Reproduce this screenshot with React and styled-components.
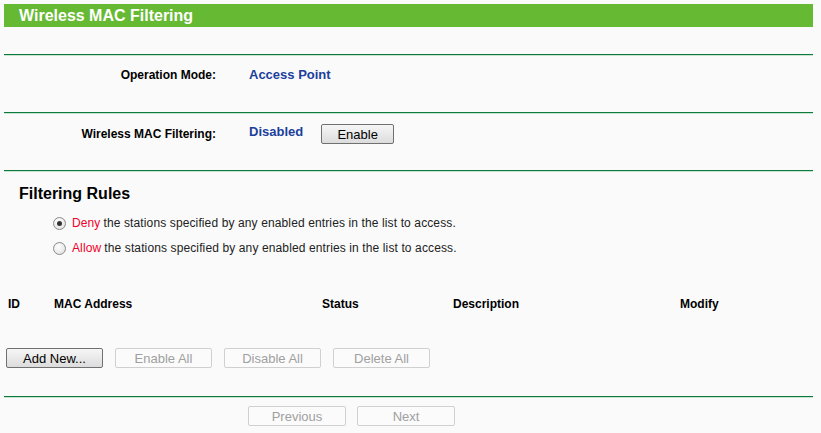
import styled, { createGlobalStyle } from "styled-components";

const GlobalStyle = createGlobalStyle`
  html, body {
    margin: 0;
    padding: 0;
    background: #fafafa;
    font-family: "Liberation Sans", Arial, sans-serif;
    font-size: 12px;
    color: #000;
  }
`;

const Page = styled.div`
  width: 809px;
  padding: 4px 8px 0 4px;
`;

const TitleBar = styled.div`
  height: 23px;
  background: #66b933;
  color: #fff;
  font-weight: bold;
  font-size: 16px;
  line-height: 23px;
  padding-left: 15px;
`;

const Divider = styled.div`
  height: 1px;
  background: #0b7a3e;
  border-bottom: 1px solid #c9e3cf;
  margin-top: ${(p) => p.$top || 0}px;
`;

const InfoRow = styled.div`
  height: 56px;
  display: flex;
  align-items: flex-start;
  padding-top: ${(p) => p.$pad || 10}px;
  box-sizing: border-box;
`;

const Label = styled.div`
  width: 212px;
  text-align: right;
  font-weight: bold;
  font-size: 12px;
  line-height: 18px;
`;

const Value = styled.div`
  margin-left: 33px;
  color: #1b3f9c;
  font-weight: bold;
  font-size: 13px;
  line-height: 18px;
`;

const Button = styled.button`
  box-sizing: border-box;
  width: ${(p) => p.$w || 97}px;
  height: 20px;
  padding: 2px 0 0;
  line-height: 16px;
  font-family: "Liberation Sans", Arial, sans-serif;
  font-size: 13px;
  color: ${(p) => (p.disabled ? "#a0a0a0" : "#000")};
  background: ${(p) =>
    p.disabled ? "#fbfbfb" : "linear-gradient(#f6f6f6, #dcdcdc)"};
  border: 1px solid ${(p) => (p.disabled ? "#d0d0d0" : "#707070")};
  border-radius: 2px;
  margin-left: ${(p) => p.$ml || 0}px;
`;

const SectionTitle = styled.div`
  font-size: 16px;
  font-weight: bold;
  padding: 12px 0 0 15px;
  line-height: 20px;
`;

const RadioList = styled.div`
  padding: 12px 0 0 49px;
  display: flex;
  flex-direction: column;
  gap: 10px;
`;

const RadioRow = styled.label`
  display: flex;
  align-items: center;
  gap: 6px;
  font-size: 12px;
  line-height: 15px;
  letter-spacing: 0.12px;
  color: #222;
`;

const RadioDot = styled.span`
  box-sizing: border-box;
  width: 13px;
  height: 13px;
  border-radius: 50%;
  border: 1px solid #8a8a8a;
  background: radial-gradient(circle at 40% 35%, #ffffff, #dcdcdc);
  display: flex;
  align-items: center;
  justify-content: center;
  &::after {
    content: "";
    width: 5px;
    height: 5px;
    border-radius: 50%;
    background: ${(p) => (p.$on ? "#333" : "transparent")};
  }
`;

const Red = styled.span`
  color: #f0002a;
  margin-right: 3px;
`;

const TableHead = styled.div`
  display: grid;
  grid-template-columns: 46px 268px 131px 227px 1fr;
  padding: 41px 0 0 4px;
  font-weight: bold;
  font-size: 12px;
  line-height: 14px;
`;

const ButtonRow = styled.div`
  display: flex;
  gap: 12px;
  padding: 37px 0 0 2px;
`;

const NavRow = styled.div`
  display: flex;
  gap: 11px;
  padding: 8px 0 0 244px;
`;

export default function App() {
  return (
    <>
      <GlobalStyle />
      <Page>
        <TitleBar>Wireless MAC Filtering</TitleBar>
        <Divider $top={27} />
        <InfoRow $pad={10}>
          <Label>Operation Mode:</Label>
          <Value>Access Point</Value>
        </InfoRow>
        <Divider />
        <InfoRow $pad={9}>
          <Label style={{ paddingTop: 2 }}>Wireless MAC Filtering:</Label>
          <Value>Disabled</Value>
          <Button $w={73} $ml={18} style={{ marginTop: 1 }}>
            Enable
          </Button>
        </InfoRow>
        <Divider />
        <SectionTitle>Filtering Rules</SectionTitle>
        <RadioList>
          <RadioRow>
            <RadioDot $on />
            <span>
              <Red>Deny</Red>the stations specified by any enabled entries in the list to access.
            </span>
          </RadioRow>
          <RadioRow>
            <RadioDot />
            <span>
              <Red>Allow</Red>the stations specified by any enabled entries in the list to access.
            </span>
          </RadioRow>
        </RadioList>
        <TableHead>
          <div>ID</div>
          <div>MAC Address</div>
          <div>Status</div>
          <div>Description</div>
          <div>Modify</div>
        </TableHead>
        <ButtonRow>
          <Button>Add New...</Button>
          <Button disabled>Enable All</Button>
          <Button disabled>Disable All</Button>
          <Button disabled>Delete All</Button>
        </ButtonRow>
        <Divider $top={28} />
        <NavRow>
          <Button $w={98} disabled>Previous</Button>
          <Button $w={98} disabled>Next</Button>
        </NavRow>
      </Page>
    </>
  );
}
